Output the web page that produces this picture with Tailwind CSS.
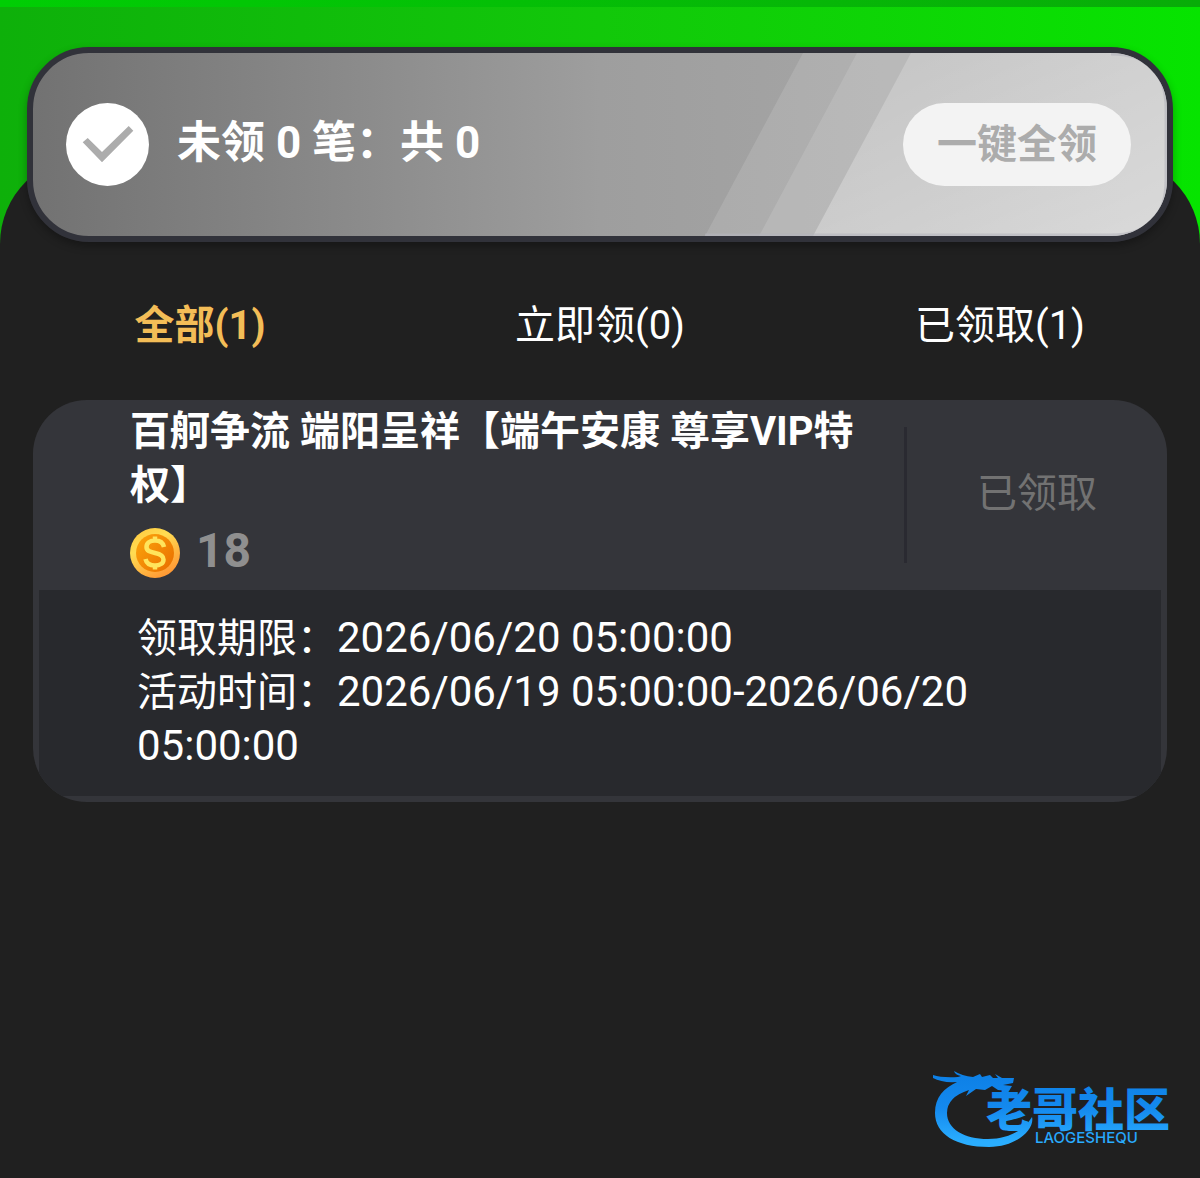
<!DOCTYPE html>
<html lang="zh-CN">
  <head>
    <meta charset="UTF-8" />
    <meta name="viewport" content="width=device-width,initial-scale=1.0" />
    <title>领取中心</title>
    <script src="https://cdn.jsdelivr.net/npm/@tailwindcss/browser@4"></script>
  </head>
  <body class="flex min-h-screen flex-col bg-[#202020] font-['Roboto','Noto_Sans_CJK_SC',sans-serif] text-white">
    <!-- Header -->
    <header class="bg-linear-to-r from-[#0eb00a] via-[#12c80a] to-[#06e400]">
      <div class="h-[7px] bg-linear-to-r from-[#00ce04] to-[#08ac08]"></div>
      <div class="px-[27px] pt-10">
        <div class="relative z-10 flex h-[195px] items-center overflow-hidden rounded-[62px] border-6 border-[#31323a] bg-linear-to-r from-[#727272] via-[#9e9e9e] to-[#acacac] pr-9 pl-[33px] shadow-[0_4px_8px_rgba(0,0,0,0.3)]">
          <!-- Slanted shine -->
          <svg class="absolute top-0 right-0 h-full" viewBox="0 0 462 183" preserveAspectRatio="xMaxYMid slice" aria-hidden="true">
            <defs>
              <linearGradient id="shine" x1="0" y1="0" x2="1" y2="1">
                <stop offset="0" stop-color="#fff" stop-opacity="0.16" />
                <stop offset="1" stop-color="#fff" stop-opacity="0.42" />
              </linearGradient>
            </defs>
            <path d="M98 0H462V183H0Z" fill="#fff" fill-opacity="0.12" />
            <path d="M152 0H462V183H54Z" fill="#fff" fill-opacity="0.12" />
            <path d="M206 0H462V183H108Z" fill="url(#shine)" />
            <path d="M0 182H406Q461 182 461 127V56Q461 1 406 1" fill="none" stroke="#b4b4bc" stroke-opacity="0.6" stroke-width="3" />
          </svg>
          <svg class="relative size-[83px]" viewBox="0 0 83 83" aria-hidden="true">
            <circle cx="41.5" cy="41.5" r="41.5" fill="#fff" />
            <path d="M16.7 39.3L21.7 35L36 49L62.7 23L67.3 27.7L36 59.3Z" fill="#acacac" />
          </svg>
          <h1 class="relative ml-7 pb-1 text-[44px] leading-none font-bold">未领 0 笔：共 0</h1>
          <button class="relative ml-auto h-[83px] rounded-full bg-[#f3f3f3] px-[34px] text-[40px] font-bold text-[#acacac]">一键全领</button>
        </div>
      </div>
      <div class="-mt-[86px] h-[88px] rounded-t-[88px] bg-[#202020]"></div>
    </header>

    <!-- Tabs -->
    <nav class="mt-[52px] grid grid-cols-3 text-center text-[40px] leading-[60px]">
      <button class="font-bold text-[#f3bd57]">全部(1)</button>
      <button>立即领(0)</button>
      <button>已领取(1)</button>
    </nav>

    <!-- Reward list -->
    <main class="px-[33px] pt-11">
      <article class="overflow-hidden rounded-[54px] bg-[#34353a] text-[40px] leading-[54px]">
        <div class="flex h-[190px]">
          <div class="flex-1 pt-[5px] pr-6 pl-[97px]">
            <h2 class="font-bold">百舸争流 端阳呈祥【端午安康 尊享VIP特权】</h2>
            <div class="mt-[11px] flex items-center gap-4">
              <svg class="mt-1 size-[50px]" viewBox="0 0 50 50" aria-hidden="true">
                <defs>
                  <linearGradient id="rim" x1="0" y1="0" x2="0.6" y2="1">
                    <stop offset="0" stop-color="#ffc63c" />
                    <stop offset="0.4" stop-color="#ffdc52" />
                    <stop offset="1" stop-color="#ff9a35" />
                  </linearGradient>
                  <linearGradient id="face" x1="0" y1="0" x2="1" y2="0.8">
                    <stop offset="0" stop-color="#fca60c" />
                    <stop offset="1" stop-color="#ea7200" />
                  </linearGradient>
                </defs>
                <circle cx="25" cy="25" r="25" fill="url(#rim)" />
                <circle cx="25" cy="25" r="19" fill="url(#face)" />
                <path d="M34 19C33 14 29 12.500 25 12.500C20 12.500 16.500 15 16.500 19C16.500 23 20 24 25 25C30 26 33.500 27.500 33.500 31.500C33.500 35.500 30 37.500 25 37.500C20 37.500 16.500 35.500 15.500 31M25 8.500V13M25 37V41.500" fill="none" stroke="#ffe45c" stroke-width="4.500" />
              </svg>
              <span class="text-[48px] font-bold text-[#8f8f8f]">18</span>
            </div>
          </div>
          <div class="my-[27px] w-[263px] border-l-3 border-[#2a2a31] pt-10 text-center">
            <span class="text-[#727272]">已领取</span>
          </div>
        </div>
        <div class="mx-[6px] mb-[6px] bg-[#28292d] pt-[22px] pr-[150px] pb-[22px] pl-[98px]">
          <p>领取期限：<time class="text-[42px] leading-none">2026/06/20 05:00:00</time></p>
          <p>活动时间：<time class="text-[42px] leading-none">2026/06/19 05:00:00-2026/06/20 05:00:00</time></p>
        </div>
      </article>
    </main>

    <!-- Community logo -->
    <footer class="mt-auto flex justify-end pr-[18px] pb-7">
      <svg class="h-[84px] w-[252px]" viewBox="0 0 252 84" role="img" aria-label="老哥社区">
        <defs>
          <linearGradient id="logo" gradientUnits="userSpaceOnUse" x1="0" y1="8" x2="0" y2="76">
            <stop offset="0" stop-color="#0d80e6" />
            <stop offset="0.5" stop-color="#1489ee" />
            <stop offset="1" stop-color="#2aaeff" />
          </linearGradient>
        </defs>
        <g fill="url(#logo)">
          <path d="M3 9Q12 12 28 11L31 10Q25 9 24 5Q32 10 43 11L50 8L52 11L60 9L63 12L68 12L65 8L72 12L84 12L83 17L73 19L82 20L79 25L68 24L62 20L55 24L46 23L36 30L39 24Q17 31 17 47C17 63 34 73 58 73C79 73 94 64 102 51C105 62 88 81 59 81C26 81 5 68 5 47C5 31 14 22 27 16Q12 17 3 12Z" />
          <text x="56" y="60" class="font-['Noto_Sans_CJK_SC',sans-serif] text-[46px] font-black">老哥社区</text>
          <text x="105" y="77" class="font-['Inter',sans-serif] text-[15px] font-medium">LAOGESHEQU</text>
        </g>
      </svg>
    </footer>
  </body>
</html>
